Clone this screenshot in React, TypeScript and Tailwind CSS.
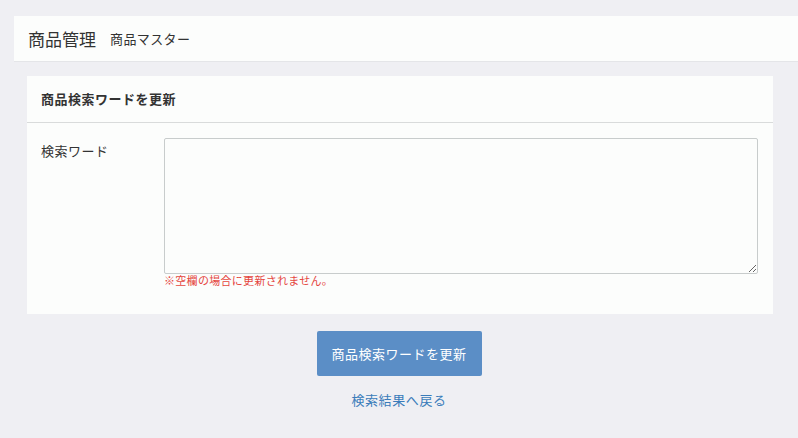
export default function App() {
  return (
    <div className="min-h-[438px] bg-[#efeff3] pt-4 pl-[14px] font-['Noto_Sans_CJK_JP',sans-serif] text-[#333]">
      {/* page header */}
      <div className="flex h-[45px] items-center gap-[14px] bg-[#fcfdfc] pl-[14px] shadow-[0_1px_0_#e4e5e8]">
        <h1 className="text-[17px] leading-none text-[#333]">商品管理</h1>
        <span className="text-[13px] leading-none tracking-[0.4px] text-[#333]">商品マスター</span>
      </div>

      <div className="mt-[15px] ml-[13px] mr-[25px] bg-[#fcfdfc]">
        <div className="flex h-[47px] items-center border-b border-[#d9dbdb] px-[14px]">
          <h2 className="text-[13px] font-bold tracking-[0.5px] text-[#333]">商品検索ワードを更新</h2>
        </div>
        <div className="flex px-[14px] pt-[15px] pb-[27px]">
          <label className="w-[123px] pt-[3px] text-[13px] tracking-[0.5px] text-[#333]">検索ワード</label>
          <div className="flex w-[594px] flex-col">
            <textarea className="h-[136px] w-full rounded-[2px] border border-[#c8cccc] bg-[#fcfdfc]" />
            <p className="-mt-[1px] text-[11px] leading-[14px] tracking-[0.3px] text-[#e5463e]">※空欄の場合に更新されません。</p>
          </div>
        </div>
      </div>

      <div className="flex flex-col items-center pr-[14px]">
        <button className="mt-[17px] h-[45px] w-[165px] rounded-[2px] bg-[#5b8ec6] text-[13px] tracking-[0.5px] text-white">
          商品検索ワードを更新
        </button>
        <a className="mt-[14px] text-[13px] tracking-[0.6px] text-[#3a7cba]" href="#">
          検索結果へ戻る
        </a>
      </div>
    </div>
  );
}
